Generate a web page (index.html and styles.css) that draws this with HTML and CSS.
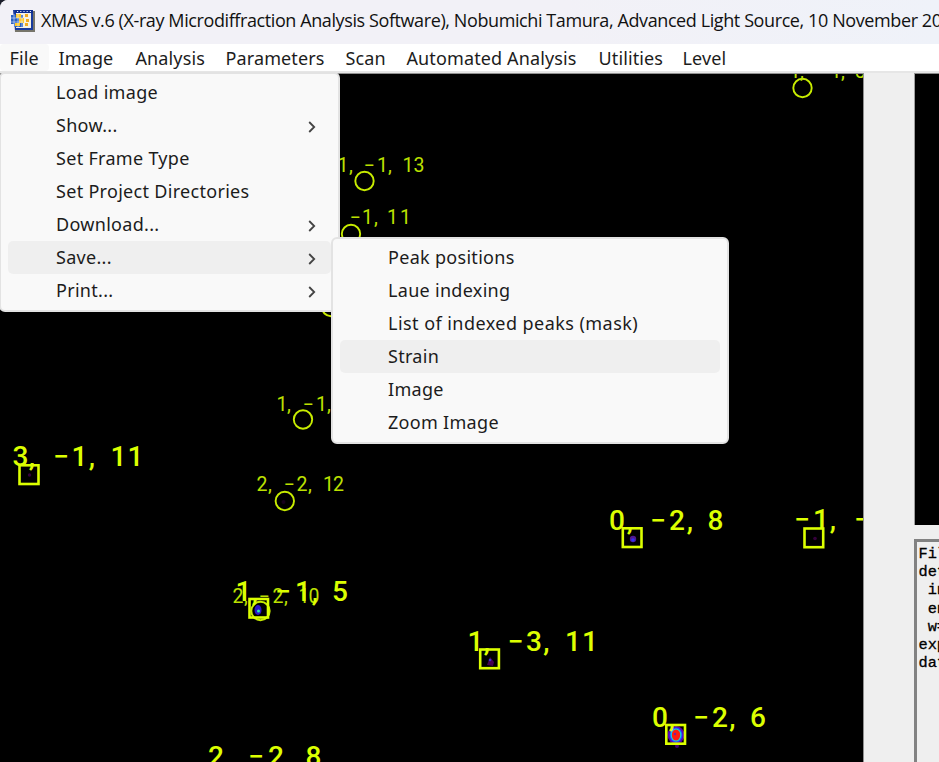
FILE: index.html
```
<!DOCTYPE html>
<html lang="en">
<head>
<meta charset="utf-8">
<title>XMAS v.6</title>
<link rel="stylesheet" href="styles.css">
</head>
<body>
<div class="window">
  <header class="titlebar">
    <svg class="app-icon" width="24" height="24" viewBox="0 0 24 24">
      <path d="M3 2h21v21H4z" fill="#77756b"/>
      <path d="M2 1h20v20H4z" fill="#173a9e"/>
      <path d="M5 4h15v15H5z" fill="#f5f1e4"/>
      <path d="M4 1h18v3H4z" fill="#0c2b8f"/>
      <path d="M6 2.5h14" stroke="#e8edff" stroke-dasharray="1.2 2"/>
      <path d="M0 6h12v12H3v-3H0z" fill="#2860c0"/>
      <path d="M5 5h5v4H5zM8 9h5v5H8zM4 14h5v3H4z" fill="#ffca28"/>
      <path d="M14 5h3v3h-3zM15 10h3v3h-3zM14 14h3v3h-3z" fill="#f0ab21"/>
      <path d="M0 9h12M0 13h12M3 5v14M7 5v14M11 5v14" stroke="#dce8ff" stroke-width=".6"/>
    </svg>
    <span class="title">XMAS v.6 (X-ray Microdiffraction Analysis Software), Nobumichi Tamura, Advanced Light Source, 10 November 2013</span>
  </header>
  <nav class="menubar">
    <span class="m-file open">File</span><span class="m-image">Image</span><span class="m-analysis">Analysis</span><span class="m-param">Parameters</span><span class="m-scan">Scan</span><span class="m-auto">Automated Analysis</span><span class="m-util">Utilities</span><span class="m-level">Level</span>
  </nav>
  <main class="workspace">
    <svg class="detector" width="864" height="689" viewBox="0 73 864 689">
      <g class="spot">
        <circle cx="29.5" cy="475" r="1.7" fill="#35003c"/>
        <circle cx="283.5" cy="502" r="2" fill="#16001c"/>
        <circle cx="633" cy="539" r="3.2" fill="#4f168f"/><circle cx="633" cy="540" r="1.8" fill="#3030f0"/>
        <circle cx="815" cy="538.5" r="1.8" fill="#35003c"/>
        <path d="M487 665l3-8 4 5-1 4z" fill="#430052"/><circle cx="490" cy="660" r="1.3" fill="#4030d0"/>
        <ellipse cx="258" cy="610" rx="3.5" ry="5" fill="#2a16c8"/><circle cx="258.5" cy="611" r="1.5" fill="#20e8c0"/>
        <ellipse cx="676" cy="735" rx="8.5" ry="9" fill="#5b00b4"/><circle cx="677" cy="746" r="2" fill="#41006e"/>
        <ellipse cx="676" cy="735" rx="6.5" ry="7.5" fill="#2448ff"/><ellipse cx="676" cy="735" rx="5.4" ry="6.5" fill="#12d8dc"/>
        <ellipse cx="676" cy="735" rx="4.2" ry="5.5" fill="#ff1c10"/><circle cx="675" cy="734" r="1.2" fill="#7a20a0"/>
      </g>
      <g class="circles">
        <circle cx="802.5" cy="88" r="9.2"/><circle cx="364.5" cy="181" r="9.2"/><circle cx="351" cy="234" r="9.2"/>
        <circle cx="331" cy="307" r="9.2"/><circle cx="303" cy="419.5" r="9.2"/><circle cx="284.8" cy="501" r="9.2"/>
        <circle cx="260.5" cy="611" r="9.2"/>
      </g>
      <g class="squares">
        <rect x="19.5" y="465.3" width="19" height="18.7"/><rect x="249.5" y="599" width="18.5" height="18.5"/>
        <rect x="480.2" y="649.5" width="18.7" height="18.7"/><rect x="622.8" y="528.3" width="18.7" height="18.7"/>
        <rect x="804.5" y="528.5" width="18.7" height="18.7"/><rect x="666.3" y="725" width="18.7" height="18.7"/>
      </g>
      <g class="small">
        <text y="78" x="795 802 808 820 836 843 850 860">1, −1, 5</text>
        <text y="172" x="343 351 358 369 382.5 390 398 408 419">1, −1, 13</text>
        <text y="224" x="355 367.5 376 383 392.5 405.5">−1, 11</text>
        <text y="411" x="282 289 296 308 321.5 329">1, −1,</text>
        <text y="491" x="262 270 277 289 302 310 318 328.5 338.5">2, −2, 12</text>
        <text y="603" x="238 246 253 264 278 286 294 304 314">2, −2, 10</text>
      </g>
      <g class="large">
        <text y="466" x="20.5 32 45 61 79.5 92 104 118.5 135.5">3, −1, 11</text>
        <text y="600.5" x="243.5 255 268 283 303 315 325 340">1, −1, 5</text>
        <text y="651" x="475.5 487 500 515.5 534 546.5 560 573 590">1, −3, 11</text>
        <text y="766" x="216 231 244 256 276 289 300 313.5">2, −2, 8</text>
        <text y="530" x="617 630 645 658 677 690 700 715.5">0, −2, 8</text>
        <text y="528.5" x="802 821 833 845 862">−1, −</text>
        <text y="726.5" x="660 672 685 701 720 732.5 745 758">0, −2, 6</text>
      </g>
      <path class="edge" d="M0 73.5h864M863.5 73v689"/>
    </svg>
    <aside class="side">
      <div class="zoom-view"></div>
      <pre class="info">File
detector
 indexed
 energy
 w=
exposure
date</pre>
    </aside>
  </main>
  <div class="menu file-menu">
    <div class="item">Load image</div>
    <div class="item sub">Show...<svg width="8" height="12" viewBox="0 0 8 12"><path d="M1.2 1l5 5-5 5"/></svg></div>
    <div class="item">Set Frame Type</div>
    <div class="item">Set Project Directories</div>
    <div class="item sub">Download...<svg width="8" height="12" viewBox="0 0 8 12"><path d="M1.2 1l5 5-5 5"/></svg></div>
    <div class="item sub active">Save...<svg width="8" height="12" viewBox="0 0 8 12"><path d="M1.2 1l5 5-5 5"/></svg></div>
    <div class="item sub">Print...<svg width="8" height="12" viewBox="0 0 8 12"><path d="M1.2 1l5 5-5 5"/></svg></div>
  </div>
  <div class="menu save-menu">
    <div class="item">Peak positions</div>
    <div class="item">Laue indexing</div>
    <div class="item wide">List of indexed peaks (mask)</div>
    <div class="item active">Strain</div>
    <div class="item">Image</div>
    <div class="item">Zoom Image</div>
  </div>
</div>
</body>
</html>
```
FILE: styles.css
```
* { box-sizing: border-box; }
body { margin: 0; background: #1b1e2b; }
.window {
  position: relative;
  width: 939px;
  height: 762px;
  overflow: hidden;
  border-top-left-radius: 8px;
  background: #efefef;
  display: flex;
  flex-direction: column;
}
.titlebar {
  height: 44px;
  flex: none;
  display: flex;
  align-items: center;
  padding: 0 0 3px 11px;
  background: linear-gradient(90deg, #f2f1f7 60%, #eff2f9);
}
.app-icon { flex: none; margin-right: 6px; }
.title {
  font: 18px/24px "Open Sans", "Noto Sans", sans-serif;
  letter-spacing: -0.4px;
  color: #111;
  white-space: nowrap;
  position: relative;
  top: -1px;
}
.menubar {
  height: 27px;
  flex: none;
  display: flex;
  background: #fff;
  font: 18px/28px "Noto Sans", sans-serif;
  letter-spacing: 0.12px;
  color: #1c1c1c;
}
.menubar span { padding-left: 9.5px; white-space: nowrap; flex: none; }
.menubar .open { background: #f9f9f9; border-radius: 4px; }
.m-file { width: 49px; }
.m-image { width: 77px; }
.m-analysis { width: 90px; }
.m-param { width: 120px; }
.m-scan { width: 61px; }
.m-auto { width: 192px; }
.m-util { width: 84px; }
.m-level { width: 70px; }
.workspace {
  flex: 1;
  display: flex;
  justify-content: space-between;
  border-top: 2px solid #e6e6e6;
}
.detector { display: block; flex: none; background: #000; }
.detector text { font-family: Roboto, sans-serif; text-anchor: middle; }
.large { font-size: 28px; font-weight: 500; fill: #dcff00; }
.small { font-size: 19.5px; fill: #bce000; }
.circles { fill: none; stroke: #c8ec00; stroke-width: 1.9; }
.squares { fill: none; stroke: #dcff00; stroke-width: 2.6; }
.edge { fill: none; stroke: #909090; }
.side { width: 25px; overflow: hidden; display: flex; flex-direction: column; gap: 14px; }
.zoom-view { height: 452px; flex: none; background: #000; border-top: 1px solid #8a8a8a; border-left: 1px solid #a0a0a0; }
.info {
  flex: 1;
  margin: 0;
  overflow: hidden;
  padding: 3px 0 0 1.5px;
  border-top: 3px solid #828282;
  border-left: 3px solid #828282;
  font: 15.3px/18.2px "Liberation Mono", monospace;
  -webkit-text-stroke: 0.3px #000;
  color: #000;
}
.menu {
  position: absolute;
  background: #f9f9f9;
  border: 2px solid #e3e3e3;
  border-radius: 6px;
  padding: 2px 7px;
  font: 18px/33px "Noto Sans", sans-serif;
  letter-spacing: 0.3px;
  color: #1c1c1c;
}
.file-menu { left: -1px; top: 72px; width: 341px; height: 240px; }
.save-menu { left: 331px; top: 237px; width: 398px; height: 207px; }
.item {
  height: 33px;
  padding: 0 15px 0 48px;
  border-radius: 5px;
  white-space: nowrap;
  display: flex;
  align-items: center;
  justify-content: space-between;
}
.item.wide { letter-spacing: 0.45px; }
.item.active { background: #efefef; }
.item svg { fill: none; stroke: #444; stroke-width: 1.8; position: relative; top: 1px; }
```
